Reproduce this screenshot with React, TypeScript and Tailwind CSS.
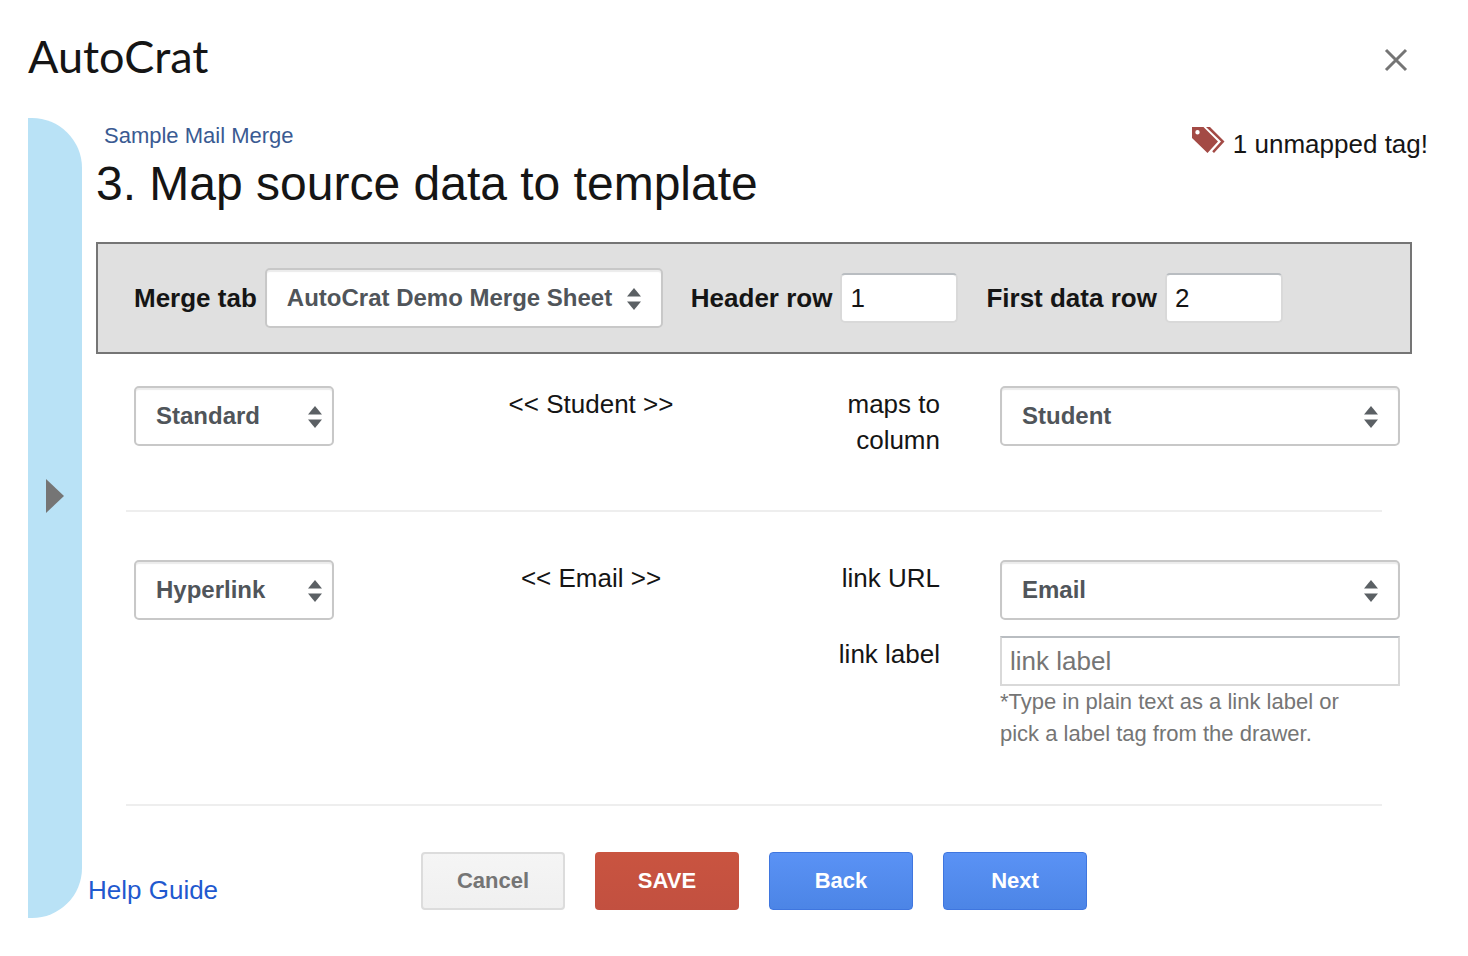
import React, { useState } from 'react';
import clsx from 'clsx';

interface SelectBoxProps {
  id: string;
  label?: string;
  options: string[];
  className?: string;
  arrowClassName?: string;
}

function SelectBox({ id, label, options, className, arrowClassName }: SelectBoxProps) {
  const [value, setValue] = useState(options[0]);

  return (
    <div className={clsx('relative', className)}>
      <select
        id={id}
        aria-label={label}
        value={value}
        onChange={(e) => setValue(e.target.value)}
        className="block h-[60px] w-full appearance-none rounded-[5px] border-2 border-[#c8c8c8] bg-white pl-5 pr-12 text-[24px] font-bold text-[#50555a] shadow-[inset_0_2px_1px_#ececec]"
      >
        {options.map((option) => (
          <option key={option}>{option}</option>
        ))}
      </select>
      <svg
        viewBox="0 0 14 22"
        className={clsx('pointer-events-none absolute top-5 h-[22px] w-[14px] fill-[#5b6064]', arrowClassName)}
      >
        <path d="M7 0L14 8.500H0z" />
        <path d="M0 13.500H14L7 22z" />
      </svg>
    </div>
  );
}

interface RowInputProps {
  id: string;
  label: string;
  initial: string;
}

function RowInput({ id, label, initial }: RowInputProps) {
  const [value, setValue] = useState(initial);

  return (
    <div className="flex items-center gap-2">
      <label htmlFor={id} className="font-bold">{label}</label>
      <input
        id={id}
        type="text"
        value={value}
        onChange={(e) => setValue(e.target.value)}
        className="h-[50px] w-[118px] rounded-[5px] border-2 border-[#d9d9d9] border-t-[#b9bdc1] bg-white px-2"
      />
    </div>
  );
}

function TagsIcon() {
  return (
    <svg viewBox="0 0 34 28" className="h-7 w-[34px] fill-[#a34a45]">
      <path fillRule="evenodd" d="M1 1H12.500L27 15.500L16.500 27L1 12zM6.500 4a2.200 2.200 0 1 0 0 4.400a2.200 2.200 0 1 0 0-4.400z" />
      <path d="M15 1H19L33.500 15.500L23 27L21.200 25.200L30 15.500z" />
    </svg>
  );
}

const buttonBase = 'h-[58px] w-36 rounded-[4px] text-[22px] font-bold';

export default function App() {
  const [linkLabel, setLinkLabel] = useState('');

  return (
    <div className="bg-white pb-[38px] pl-7 pr-10 pt-7 font-['Liberation_Sans',Arial,sans-serif] text-[26px] leading-9 text-[#151515]">
      <header className="mb-[34px] flex h-14 items-center justify-between">
        <h1 className="font-['Lato',sans-serif] text-[45px] leading-[56px]">AutoCrat</h1>
        <button type="button" aria-label="Close" className="mr-5 mt-2">
          <svg viewBox="0 0 24 24" className="h-6 w-6 fill-none stroke-[#757575] stroke-[3]">
            <path d="M2 2L22 22M22 2L2 22" />
          </svg>
        </button>
      </header>

      <div className="flex gap-[6px]">
        {/* drawer handle */}
        <button
          type="button"
          aria-label="Open drawer"
          className="flex w-[54px] shrink-0 items-center rounded-r-[50px] bg-[#b9e2f6] pl-[18px]"
        >
          <svg viewBox="0 0 18 34" className="mb-11 h-[34px] w-[18px] fill-[#757575]">
            <path d="M0 0L18 17L0 34z" />
          </svg>
        </button>

        <main className="flex-1">
          <div className="flex h-[124px] items-start justify-between pl-2">
            <div>
              <p className="pl-2 text-[22px] leading-9 text-[#3a5a92]">Sample Mail Merge</p>
              <h2 className="text-[48px] leading-[60px]">3. Map source data to template</h2>
            </div>
            <div className="flex items-start gap-2 pt-2">
              <TagsIcon />
              <span>1 unmapped tag!</span>
            </div>
          </div>

          <div className="ml-2 mr-4 flex h-28 items-center gap-7 border-2 border-[#757575] bg-[#e0e0e0] px-9">
            <div className="flex items-center gap-2">
              <label htmlFor="merge-tab" className="font-bold">Merge tab</label>
              <SelectBox id="merge-tab" options={['AutoCrat Demo Merge Sheet']} className="w-[398px]" arrowClassName="right-[22px]" />
            </div>
            <RowInput id="header-row" label="Header row" initial="1" />
            <RowInput id="first-data-row" label="First data row" initial="2" />
          </div>

          <section className="grid h-[156px] grid-cols-[218px_1fr_110px_460px] pl-[46px] pr-7 pt-8">
            <SelectBox id="type-student" label="Student tag type" options={['Standard', 'Hyperlink']} className="w-[200px]" arrowClassName="right-3" />
            <p className="text-center">&lt;&lt; Student &gt;&gt;</p>
            <label htmlFor="column-student" className="text-right">maps to column</label>
            <SelectBox id="column-student" options={['Student', 'Email']} className="ml-[60px]" arrowClassName="right-[22px]" />
          </section>
          <hr className="ml-[38px] mr-[46px] border-t-2 border-[#eeeeee]" />

          <section className="grid h-[292px] grid-cols-[218px_1fr_110px_460px] content-start gap-y-4 pl-[46px] pr-7 pt-12">
            <SelectBox id="type-email" label="Email tag type" options={['Hyperlink', 'Standard']} className="w-[200px]" arrowClassName="right-3" />
            <p className="text-center">&lt;&lt; Email &gt;&gt;</p>
            <label htmlFor="column-email" className="text-right">link URL</label>
            <SelectBox id="column-email" options={['Email', 'Student']} className="ml-[60px]" arrowClassName="right-[22px]" />

            <label htmlFor="link-label" className="col-start-3 text-right">link label</label>
            <div className="ml-[60px]">
              <input
                id="link-label"
                type="text"
                placeholder="link label"
                value={linkLabel}
                onChange={(e) => setLinkLabel(e.target.value)}
                className="block h-[50px] w-full border-2 border-[#d9d9d9] border-t-[#b9bdc1] px-2 placeholder:text-[#757575]"
              />
              <p className="pr-8 text-[22px] leading-8 text-[#757575]">
                *Type in plain text as a link label or pick a label tag from the drawer.
              </p>
            </div>
          </section>
          <hr className="ml-[38px] mr-[46px] border-t-2 border-[#eeeeee]" />

          <footer className="mr-2 grid h-28 grid-cols-[1fr_auto_1fr] pt-[46px]">
            <div className="pt-5">
              <a href="#help" className="text-[#1f59cf]">Help Guide</a>
            </div>
            <div className="flex gap-[30px]">
              <button type="button" className={clsx(buttonBase, 'border-2 border-[#dcdcdc] bg-linear-to-b from-[#f5f5f5] to-[#f0f0f0] text-[#757575]')}>Cancel</button>
              <button type="button" className={clsx(buttonBase, 'bg-linear-to-b from-[#c95440] to-[#c25040] text-white')}>SAVE</button>
              <button type="button" className={clsx(buttonBase, 'border border-[#3f76df] bg-linear-to-b from-[#5a92f5] to-[#4c85e6] text-white')}>Back</button>
              <button type="button" className={clsx(buttonBase, 'border border-[#3f76df] bg-linear-to-b from-[#5a92f5] to-[#4c85e6] text-white')}>Next</button>
            </div>
          </footer>
        </main>
      </div>
    </div>
  );
}
